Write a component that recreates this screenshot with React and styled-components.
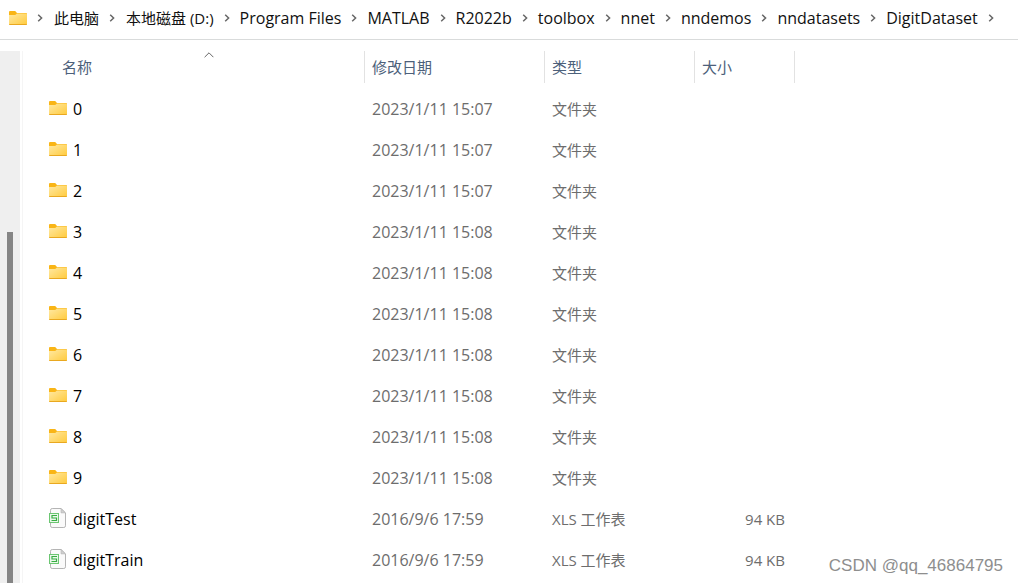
import styled, { createGlobalStyle } from 'styled-components'

const crumbs = [
  { name: '此电脑', small: true },
  { name: '本地磁盘 (D:)', small: true },
  { name: 'Program Files' },
  { name: 'MATLAB' },
  { name: 'R2022b' },
  { name: 'toolbox' },
  { name: 'nnet' },
  { name: 'nndemos' },
  { name: 'nndatasets' },
  { name: 'DigitDataset' },
]

const folder = (name, date) => ({ name, date, type: '文件夹', size: '' })
const sheet = (name) => ({ name, date: '2016/9/6 17:59', type: 'XLS 工作表', size: '94 KB' })

const files = [
  folder('0', '2023/1/11 15:07'),
  folder('1', '2023/1/11 15:07'),
  folder('2', '2023/1/11 15:07'),
  folder('3', '2023/1/11 15:08'),
  folder('4', '2023/1/11 15:08'),
  folder('5', '2023/1/11 15:08'),
  folder('6', '2023/1/11 15:08'),
  folder('7', '2023/1/11 15:08'),
  folder('8', '2023/1/11 15:08'),
  folder('9', '2023/1/11 15:08'),
  sheet('digitTest'),
  sheet('digitTrain'),
]

const FolderIcon = () => (
  <svg width="18" height="16" viewBox="0 0 18 16" aria-hidden="true">
    <defs>
      <linearGradient id="folderFront" x1="0" y1="0" x2="1" y2="1">
        <stop offset="0" stopColor="#ffe9a3" />
        <stop offset="1" stopColor="#ffca3c" />
      </linearGradient>
    </defs>
    <path d="M0 2a1 1 0 0 1 1-1h5.2l1.8 2h9a1 1 0 0 1 1 1v6H0z" fill="#f9b516" />
    <path d="M0 5h6.2L8 3.4h9a1 1 0 0 1 1 1V14a1 1 0 0 1-1 1H1a1 1 0 0 1-1-1z" fill="url(#folderFront)" />
    <path d="M0 14h18a1 1 0 0 1-1 1H1a1 1 0 0 1-1-1z" fill="#e9a820" />
  </svg>
)

const SheetIcon = () => (
  <svg width="18" height="20" viewBox="0 0 18 20" aria-hidden="true">
    <path d="M3.2.5h9l4.3 4.3v13a1.7 1.7 0 0 1-1.7 1.7H3.2a1.7 1.7 0 0 1-1.7-1.7V2.2A1.7 1.7 0 0 1 3.2.5z" fill="#fafafa" stroke="#b4b4b4" />
    <path d="M12 .8v4.1h4.2z" fill="#d0d0d0" stroke="#b4b4b4" strokeWidth=".6" />
    <rect x=".5" y="5.5" width="9" height="9" fill="#eaf8ea" stroke="#6cc672" />
    <path d="M8 7.5H3V10h4.5v2.5h-5" fill="none" stroke="#37ad43" strokeWidth="1.2" />
  </svg>
)

const Chevron = () => (
  <svg width="6" height="8" viewBox="0 0 6 8" aria-hidden="true">
    <path d="M1.2.8 4.6 4 1.2 7.2" fill="none" stroke="#666" strokeWidth="1.5" />
  </svg>
)

const SortArrow = () => (
  <svg width="10" height="6" viewBox="0 0 10 6" aria-hidden="true">
    <path d="M.6 5.2 5 .8l4.4 4.4" fill="none" stroke="#666" />
  </svg>
)

function App() {
  return (
    <Window>
      <GlobalStyle />
      <AddressBar aria-label="路径">
        <FolderIcon />
        {crumbs.map(({ name, small }) => (
          <Crumb key={name} $small={small}>
            <Chevron />
            <a href="#">{name}</a>
          </Crumb>
        ))}
        <Crumb>
          <Chevron />
        </Crumb>
      </AddressBar>
      <Body>
        <NavPane>
          <Thumb />
        </NavPane>
        <Content>
          <FileTable>
            <colgroup>
              <Col $width={342} />
              <Col $width={180} />
              <Col $width={150} />
              <Col $width={100} />
              <col />
            </colgroup>
            <thead>
              <tr>
                <HeadCell aria-sort="ascending">
                  <HeadButton $first>
                    名称
                    <SortMark><SortArrow /></SortMark>
                  </HeadButton>
                </HeadCell>
                <HeadCell><HeadButton>修改日期</HeadButton></HeadCell>
                <HeadCell><HeadButton>类型</HeadButton></HeadCell>
                <HeadCell><HeadButton>大小</HeadButton></HeadCell>
                <td />
              </tr>
            </thead>
            <tbody>
              {files.map((file) => (
                <tr key={file.name}>
                  <Cell $large>
                    <FileName>
                      <IconBox>{file.size ? <SheetIcon /> : <FolderIcon />}</IconBox>
                      <span>{file.name}</span>
                    </FileName>
                  </Cell>
                  <Cell $large>{file.date}</Cell>
                  <Cell>{file.type}</Cell>
                  <Cell $right>{file.size}</Cell>
                  <td />
                </tr>
              ))}
            </tbody>
          </FileTable>
        </Content>
      </Body>
      <Watermark>CSDN @qq_46864795</Watermark>
    </Window>
  )
}

export default App;


const GlobalStyle = createGlobalStyle`
  * {
    box-sizing: border-box;
  }

  body {
    margin: 0;
    background: #fff;
    color: #000;
    font-family: "Open Sans", "Noto Sans CJK SC", sans-serif;
    font-size: 15px;
    line-height: 20px;
  }
`;

const Window = styled.div`
  position: relative;
  display: flex;
  flex-direction: column;
  height: 100vh;
  overflow: hidden;
`;

const AddressBar = styled.nav`
  display: flex;
  align-items: center;
  flex: none;
  height: 40px;
  padding: 0 9px 4px;
  border-bottom: 1px solid #d9dbdb;
  white-space: nowrap;
`;

const Crumb = styled.span`
  display: flex;
  align-items: center;
  gap: ${({ $small }) => ($small ? '11px' : '10px')};
  padding-left: 10px;
  font-size: ${({ $small }) => ($small ? '15px' : '16px')};

  a {
    color: #111;
    text-decoration: none;
  }
`;

const Body = styled.div`
  display: flex;
  flex: 1;
  min-height: 0;
  gap: 2px;
  padding-top: 11px;
`;

const NavPane = styled.div`
  flex: none;
  width: 20px;
  padding: 181px 7px 0;
  background: #efefef;
`;

const Thumb = styled.div`
  width: 6px;
  height: 100%;
  background: #858585;
`;

const Content = styled.main`
  flex: 1;
  min-width: 0;
  border-left: 1px solid #f5f5f5;
`;

const FileTable = styled.table`
  width: 100%;
  table-layout: fixed;
  border-collapse: collapse;
`;

const Col = styled.col`
  width: ${({ $width }) => $width}px;
`;

const HeadCell = styled.th`
  padding: 0 0 5px;
  font-weight: 400;
`;

const HeadButton = styled.button`
  position: relative;
  display: block;
  width: 100%;
  height: 32px;
  padding: 0 7px;
  padding-left: ${({ $first }) => ($first ? '39px' : '7px')};
  border: 0;
  border-right: 1px solid #e2e2e2;
  background: none;
  color: #4c607a;
  font: inherit;
  text-align: left;
`;

const SortMark = styled.span`
  position: absolute;
  top: 1px;
  left: 0;
  display: flex;
  justify-content: center;
  width: 100%;
  padding-left: 30px;
`;

const Cell = styled.td`
  height: 41px;
  padding: 0 ${({ $right }) => ($right ? '10px' : '7px')};
  color: #6d6d6d;
  font-size: ${({ $large }) => ($large ? '16px' : '15px')};
  text-align: ${({ $right }) => ($right ? 'right' : 'left')};
  white-space: nowrap;
`;

const FileName = styled.div`
  display: flex;
  align-items: center;
  gap: 6px;
  padding-left: 19px;
  color: #000;
`;

const IconBox = styled.span`
  display: flex;
  padding-bottom: 2px;
`;

const Watermark = styled.div`
  position: absolute;
  right: 15px;
  bottom: 7px;
  color: #8e8e8e;
  font-family: "Liberation Sans", Arial, sans-serif;
  font-size: 17px;
`;
